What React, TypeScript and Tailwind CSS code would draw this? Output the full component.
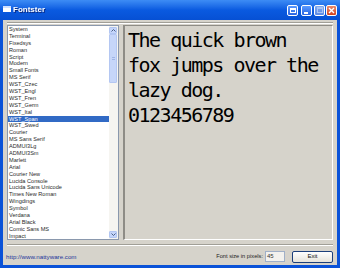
import React from 'react';

const fonts = [
  'System', 'Terminal', 'Fixedsys', 'Roman', 'Script', 'Modern', 'Small Fonts', 'MS Serif',
  'WST_Czec', 'WST_Engl', 'WST_Fren', 'WST_Germ', 'WST_Ital', 'WST_Span', 'WST_Swed',
  'Courier', 'MS Sans Serif', 'ADMUI3Lg', 'ADMUI3Sm', 'Marlett', 'Arial', 'Courier New',
  'Lucida Console', 'Lucida Sans Unicode', 'Times New Roman', 'Wingdings', 'Symbol',
  'Verdana', 'Arial Black', 'Comic Sans MS', 'Impact',
];

const sans = "font-['Liberation_Sans',Arial,sans-serif]";

const TitleButton = ({ kind }: { kind: 'tray' | 'min' | 'max' | 'close' }) => {
  const base = 'w-[11px] h-[11px] rounded-[2px] border border-white flex items-center justify-center';
  if (kind === 'close') {
    return (
      <div className={`${base} bg-gradient-to-b from-[#e98a6c] to-[#d2401c]`}>
        <svg width="7" height="7" viewBox="0 0 7 7">
          <path d="M1 1L6 6M6 1L1 6" stroke="white" strokeWidth="1.4" />
        </svg>
      </div>
    );
  }
  return (
    <div className={`${base} ${kind === 'max' ? 'bg-gradient-to-b from-[#7fa9f0] to-[#5c8ae6] border-[#c9d8f7]' : 'bg-gradient-to-b from-[#5a9aff] to-[#2a64e2]'}`}>
      {kind === 'tray' && <div className="w-[6px] h-[5px] border border-white border-t-2" />}
      {kind === 'min' && <div className="w-[4px] h-[2px] bg-white mt-[5px] -ml-[2px]" />}
      {kind === 'max' && <div className="w-[6px] h-[6px] border border-[#a9c3f3] border-t-2" />}
    </div>
  );
};

const ScrollArrow = ({ up }: { up?: boolean }) => (
  <div className="h-[7px] w-full bg-[#c4d5fb] border border-[#b2c6f2] rounded-[1px] flex items-center justify-center">
    <svg width="5" height="3" viewBox="0 0 5 3">
      <path d={up ? 'M0.5 2.5L2.5 0.5L4.5 2.5' : 'M0.5 0.5L2.5 2.5L4.5 0.5'} stroke="#4d6185" strokeWidth="1" fill="none" />
    </svg>
  </div>
);

export default function App() {
  return (
    <div className="w-[340px] h-[268px] bg-[#0a52d8] flex flex-col">
      {/* title bar */}
      <div className="h-[20px] flex items-center bg-gradient-to-b from-[#3d8cf5] via-[#0a5ae0] to-[#0650d4] px-[3px]">
        <div className="w-[8px] h-[6px] bg-white border-t-2 border-[#cfe0ff] mt-[-2px]" />
        <span className={`${sans} text-[8px] font-bold text-white ml-[2px] drop-shadow-[1px_1px_0_#0a2a80]`}>Fontster</span>
        <div className="ml-auto flex items-center">
          <TitleButton kind="tray" />
          <div className="w-[3px]" />
          <TitleButton kind="min" />
          <div className="w-[2px]" />
          <TitleButton kind="max" />
          <div className="w-[1px]" />
          <TitleButton kind="close" />
        </div>
      </div>

      {/* client area */}
      <div className="flex-1 mx-[3px] mb-[3px] bg-[#d6d3cb] flex flex-col px-[4px]">
        <div className="mt-[2px] border-t border-[#a19f97] border-b border-b-white" />
        <div className="flex mt-[1px] h-[215px]">
          {/* font list */}
          <div className="w-[112px] bg-white border border-[#8a98ad] flex">
            <div className={`flex-1 ${sans} text-[5.6px] text-[#2a2a2a]`}>
              {fonts.map(f => (
                <div
                  key={f}
                  className={`h-[6.9px] leading-[6.9px] pl-[1px] whitespace-nowrap ${f === 'WST_Span' ? 'bg-[#316ac5] text-white' : ''}`}
                >
                  {f}
                </div>
              ))}
            </div>
            <div className="w-[9px] bg-[#f6f5f1] flex flex-col py-[1px] pr-[1px]">
              <ScrollArrow up />
              <div className="h-[49px] bg-[#c6d6f9] border border-[#b4c7f2] rounded-[1px] flex items-center justify-center">
                <div className="w-[3px] h-[3px] border-t border-b border-[#9fb5e6]" />
              </div>
              <div className="flex-1" />
              <ScrollArrow />
            </div>
          </div>

          {/* preview */}
          <div className="flex-1 ml-[4px] border-l-2 border-t border-l-[#8e8c86] border-t-[#8e8c86] border-r border-b border-r-white border-b-white pl-[3px] pt-[2px] overflow-hidden">
            <div className="font-['DejaVu_Sans_Mono',monospace] text-[20px] leading-[25px] tracking-[-1.5px] text-black whitespace-pre">
              <div>The quick brown</div>
              <div>fox jumps over the</div>
              <div>lazy dog.</div>
              <div>0123456789</div>
            </div>
          </div>
        </div>

        <div className="mt-[4px] border-t border-[#a19f97] border-b border-b-white" />

        {/* footer */}
        <div className="flex-1 flex items-center pt-[2px]">
          <span className={`${sans} text-[6.2px] text-[#23349a] -ml-[1px]`}>http://www.nattyware.com</span>
          <span className={`${sans} text-[5.7px] text-[#222] ml-auto`}>Font size in pixels:</span>
          <div className={`w-[20px] h-[11px] ml-[2px] bg-[#f3f2ee] border border-[#a0b0c8] ${sans} text-[6px] leading-[9px] pl-[1px] text-[#333]`}>45</div>
          <div className={`w-[41px] h-[12px] ml-[7px] rounded-[2px] border border-[#1c3f7a] bg-gradient-to-b from-white to-[#e6e3da] flex items-center justify-center ${sans} text-[6px] text-[#111]`}>
            Exit
          </div>
        </div>
      </div>
    </div>
  );
}
